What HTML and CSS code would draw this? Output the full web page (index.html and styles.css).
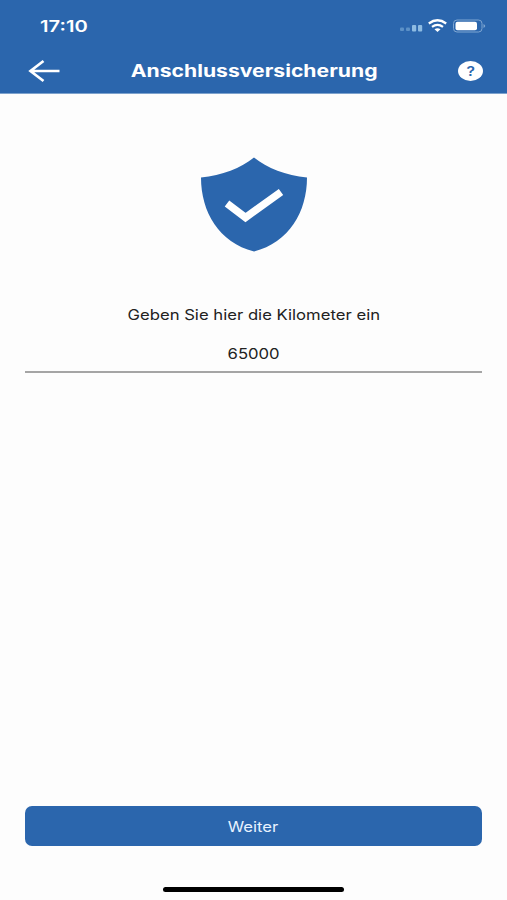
FILE: index.html
```html
<!DOCTYPE html>
<html lang="de">
<head>
  <meta charset="UTF-8" />
  <meta name="viewport" content="width=device-width, initial-scale=1.0" />
  <title>Anschlussversicherung</title>
  <link rel="stylesheet" href="styles.css">
</head>
<body>

<header>
  <div class="status">
    <span class="wide time">17:10</span>
    <svg class="status-icons" width="88" height="16" viewBox="0 0 88 16">
      <g fill="#8dbbe2">
        <rect x="1" y="9.5" width="4" height="3.5" rx="1" opacity=".5"/>
        <rect x="7" y="9.5" width="4" height="3.5" rx="1" opacity=".5"/>
        <rect x="13" y="7" width="4.2" height="6.500" rx="1"/>
        <rect x="19" y="7" width="4.2" height="6.500" rx="1"/>
      </g>
      <g fill="none" stroke="#fff" stroke-width="2.200">
        <path d="M29.800 5.500Q38.500 -1 47.200 5.500"/>
        <path d="M33 8.900Q38.500 4.800 44 8.900"/>
      </g>
      <path d="M35.500 11.300Q38.500 9.200 41.500 11.300L38.500 14Z" fill="#fff"/>
      <rect x="54.500" y="2" width="28.500" height="12" rx="3.500" fill="none" stroke="#7fa6d2"/>
      <rect x="56.500" y="3.800" width="21.500" height="8.500" rx="2" fill="#fff"/>
      <path d="M84.500 6Q88 8 84.500 10Z" fill="#7fa6d2"/>
    </svg>
  </div>
  <div class="navbar">
    <svg class="back" width="34" height="24" viewBox="0 0 34 24" fill="none" stroke="#fff" stroke-width="2.700">
      <path d="M32.500 12H3.500M16.500 2L3.500 12L16.500 22"/>
    </svg>
    <h1><span class="wide title">Anschlussversicherung</span></h1>
    <div class="help"><span class="wide">?</span></div>
  </div>
</header>

<main>
  <svg class="shield" width="108" height="96" viewBox="0 0 108 96">
    <path d="M54 1.500C67 12 86 19.500 107 21.500C107 56 89 86.500 54 95.500C19 86.500 1 56 1 21.500C22 19.500 41 12 54 1.500Z" fill="#2b66ad"/>
    <path d="M27 47.500L45.500 61.500L81 36" fill="none" stroke="#fff" stroke-width="7.500"/>
  </svg>
  <label for="km"><span class="wide label">Geben Sie hier die Kilometer ein</span></label>
  <div class="field" id="km"><span class="wide value">65000</span></div>
</main>

<footer>
  <button class="button"><span class="wide next">Weiter</span></button>
  <div class="home-bar"></div>
</footer>

</body>
</html>
```
FILE: styles.css
```css
* {
  box-sizing: border-box;
  margin: 0;
  padding: 0;
}
body {
  display: flex;
  flex-direction: column;
  height: 900px;
  font-family: 'Inter', sans-serif;
  background: #fdfdfd;
  color: #222;
  overflow: hidden;
}
header {
  height: 94px;
  background: #2b66ad;
  border-bottom: 1px solid #7da2cd;
  color: #fff;
}
/* extended lettering */
.wide {
  display: inline-block;
  white-space: nowrap;
  transform: scaleX(1.15);
}
.status {
  display: flex;
  justify-content: space-between;
  align-items: center;
  height: 48px;
  padding: 4px 20px 0 40px;
}
.time {
  font-size: 16px;
  font-weight: 600;
  transform: scaleX(1.26);
  transform-origin: left;
}
.navbar {
  display: flex;
  justify-content: space-between;
  align-items: center;
  height: 46px;
  padding: 0 24px 0 27px;
}
h1 {
  margin-right: 10px;
  font-size: 17px;
  font-weight: 700;
}
.title {
  transform: scaleX(1.245);
}
.help {
  width: 25px;
  height: 20px;
  border-radius: 50%;
  background: #fff;
  color: #2b66ad;
  font-size: 13.5px;
  font-weight: 600;
  line-height: 20px;
  text-align: center;
}
main {
  flex: 1;
  display: flex;
  flex-direction: column;
  align-items: center;
  padding: 62px 25px 0;
}
label {
  margin-top: 52px;
  font-size: 14.5px;
  line-height: 22px;
}
.field {
  width: 100%;
  height: 47px;
  padding-top: 17px;
  border-bottom: 2px solid #a5a5a5;
  font-size: 14.5px;
  line-height: 22px;
  text-align: center;
}
footer {
  display: flex;
  flex-direction: column;
  align-items: center;
  padding: 0 25px 8px;
}
.button {
  width: 100%;
  height: 40px;
  border: none;
  border-radius: 7px;
  background: #2b66ad;
  color: #e8f2ff;
  font-family: inherit;
  font-size: 14.5px;
}
.home-bar {
  width: 181px;
  height: 5px;
  margin-top: 41px;
  border-radius: 3px;
  background: #000;
}
```
